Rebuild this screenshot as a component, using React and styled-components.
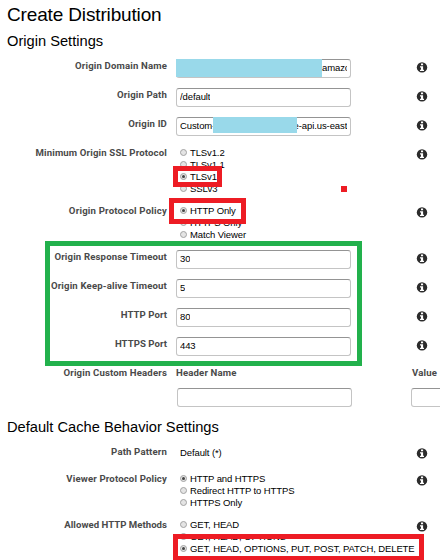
import React from "react";
import styled, { createGlobalStyle } from "styled-components";

const GlobalStyle = createGlobalStyle`
  html, body { margin: 0; background: #fff; overflow: hidden; }
  * { box-sizing: border-box; }
`;

const Page = styled.main`
  position: relative;
  width: 440px;
  height: 560px;
  overflow: hidden;
  padding: 3px 0 0 8px;
  font-family: "Liberation Sans", Arial, sans-serif;
  color: #000;
`;

const Title = styled.h1`
  margin: 0 0 0 -1px;
  height: 26px;
  font-size: 19px;
  line-height: 23px;
  font-weight: 400;
  letter-spacing: -0.15px;
`;

const SectionTitle = styled.h2`
  margin: 0 0 0 -1px;
  height: 30px;
  font-size: 14.67px;
  line-height: 24px;
  font-weight: 400;
  white-space: nowrap;
`;

const Row = styled.div`
  display: grid;
  grid-template-columns: 159px 235px 38px;
  align-items: start;
  height: ${(p) => p.$height}px;
`;

const Label = styled.label`
  font-family: Roboto, "Liberation Sans", sans-serif;
  font-size: 9.6px;
  line-height: 14px;
  font-weight: 700;
  letter-spacing: ${(p) => p.$track ?? 0.15}px;
  text-align: ${(p) => (p.$left ? "left" : "right")};
  white-space: nowrap;
  color: #4a4a4a;
`;

const Control = styled.div`
  padding-left: 9px;
`;

const Field = styled.div`
  display: flex;
  align-items: center;
  justify-content: ${(p) => (p.$end ? "flex-end" : "flex-start")};
  width: 175px;
  height: 19px;
  padding: 0 3px 2px;
  border: 1px solid #c4c4c4;
  border-top-color: #949494;
  border-radius: 3px;
  background: #fff;
  font-size: 9.5px;
  letter-spacing: -0.1px;
  white-space: pre;
`;

const FieldText = styled.span`
  overflow: hidden;
  white-space: pre;
  width: ${(p) => (p.$width ? p.$width + "px" : "auto")};
`;

const Option = styled.div`
  display: flex;
  align-items: center;
  gap: 3px;
  height: 12px;
  padding-left: 4px;
  font-size: 9.5px;
  line-height: 12px;
  letter-spacing: -0.12px;
  white-space: nowrap;
`;

const OptionText = styled.span`
  padding-top: 2px;
  line-height: 12px;
`;

const Radio = styled.span`
  display: grid;
  place-items: center;
  flex: none;
  width: 7px;
  height: 7px;
  border: 1px solid #a2a2a2;
  border-radius: 50%;
  background: #e4e4e4;
  &::after {
    content: "";
    width: 3px;
    height: 3px;
    border-radius: 50%;
    background: ${(p) => (p.$on ? "#444" : "transparent")};
  }
`;

const PlainText = styled.div`
  padding-left: 4px;
  font-size: 9.5px;
  letter-spacing: -0.1px;
  line-height: 16px;
`;

const InfoSvg = styled.svg`
  display: block;
  margin: 3px 0 0 14px;
`;

const HeaderGrid = styled.div`
  display: grid;
  grid-template-columns: 234px 175px;
  row-gap: 8px;
  padding-left: 10px;
`;

const HeaderLabel = styled(Label)`
  margin-left: ${(p) => p.$shift}px;
`;

const Overlay = styled.div`
  position: absolute;
  left: ${(p) => p.$x}px;
  top: ${(p) => p.$y}px;
  width: ${(p) => p.$w}px;
  height: ${(p) => p.$h}px;
`;

const Frame = styled(Overlay)`
  border: 5px solid ${(p) => (p.$green ? "#22b14c" : "#ed1c24")};
  border-bottom-width: ${(p) => p.$bottom || 5}px;
`;

const Redaction = styled(Overlay)`
  background: #99d9ea;
`;

const Dot = styled(Overlay)`
  background: #ed1c24;
`;

function Info() {
  return (
    <InfoSvg width="12" height="11" viewBox="0 0 12 11" aria-label="Info">
      <circle cx="6" cy="5.4" r="5.2" fill="#2c2c2c" />
      <path d="M5 1.5h2.1v1.7H5z M4 4.2h3.1v3.6H8v1.2H4V7.8h1V5.4H4z" fill="#fff" />
    </InfoSvg>
  );
}

function SettingRow({ label, track, height = 29, children }) {
  return (
    <Row $height={height}>
      <Label $track={track}>{label}</Label>
      <Control>{children}</Control>
      <Info />
    </Row>
  );
}

function Options({ items, selected }) {
  return items.map((text, i) => (
    <Option key={text}>
      <Radio $on={i === selected} />
      <OptionText>{text}</OptionText>
    </Option>
  ));
}

export default function App() {
  return (
    <Page>
      <GlobalStyle />
      <Title>Create Distribution</Title>
      <SectionTitle>Origin Settings</SectionTitle>

      <SettingRow label="Origin Domain Name">
        <Field $end><FieldText $width={25}>amazo</FieldText></Field>
      </SettingRow>
      <SettingRow label="Origin Path">
        <Field><FieldText>/default</FieldText></Field>
      </SettingRow>
      <SettingRow label="Origin ID">
        <Field>
          <FieldText $width={114}>Custom-</FieldText>
          <FieldText>e-api.us-east</FieldText>
        </Field>
      </SettingRow>
      <SettingRow label="Minimum Origin SSL Protocol" height={58}>
        <Options items={["TLSv1.2", "TLSv1.1", "TLSv1", "SSLv3"]} selected={2} />
      </SettingRow>
      <SettingRow label="Origin Protocol Policy" track={0.2} height={46}>
        <Options items={["HTTP Only", "HTTPS Only", "Match Viewer"]} selected={0} />
      </SettingRow>
      <SettingRow label="Origin Response Timeout">
        <Field><FieldText>30</FieldText></Field>
      </SettingRow>
      <SettingRow label="Origin Keep-alive Timeout">
        <Field><FieldText>5</FieldText></Field>
      </SettingRow>
      <SettingRow label="HTTP Port" track={0.05}>
        <Field><FieldText>80</FieldText></Field>
      </SettingRow>
      <SettingRow label="HTTPS Port" track={0.05}>
        <Field><FieldText>443</FieldText></Field>
      </SettingRow>

      <Row $height={49}>
        <Label>Origin Custom Headers</Label>
        <HeaderGrid>
          <HeaderLabel $left $shift={-1}>Header Name</HeaderLabel>
          <HeaderLabel $left $shift={1}>Value</HeaderLabel>
          <Field />
          <Field />
        </HeaderGrid>
      </Row>

      <SectionTitle>Default Cache Behavior Settings</SectionTitle>
      <SettingRow label="Path Pattern" height={27}>
        <PlainText>Default (*)</PlainText>
      </SettingRow>
      <SettingRow label="Viewer Protocol Policy" height={46}>
        <Options items={["HTTP and HTTPS", "Redirect HTTP to HTTPS", "HTTPS Only"]} selected={0} />
      </SettingRow>
      <SettingRow label="Allowed HTTP Methods" track={0.03} height={42}>
        <Options
          items={["GET, HEAD", "GET, HEAD, OPTIONS", "GET, HEAD, OPTIONS, PUT, POST, PATCH, DELETE"]}
          selected={2}
        />
      </SettingRow>

      <Redaction $x={176} $y={59} $w={146} $h={18} />
      <Redaction $x={213} $y={117} $w={84} $h={16} />
      <Frame $x={173} $y={166} $w={49} $h={21} />
      <Frame $x={169} $y={198} $w={77} $h={26} />
      <Frame $x={173} $y={534} $w={251} $h={26} $bottom={4} />
      <Frame $green $x={45} $y={241} $w={317} $h={125} />
      <Dot $x={341} $y={186} $w={6} $h={6} />
    </Page>
  );
}
